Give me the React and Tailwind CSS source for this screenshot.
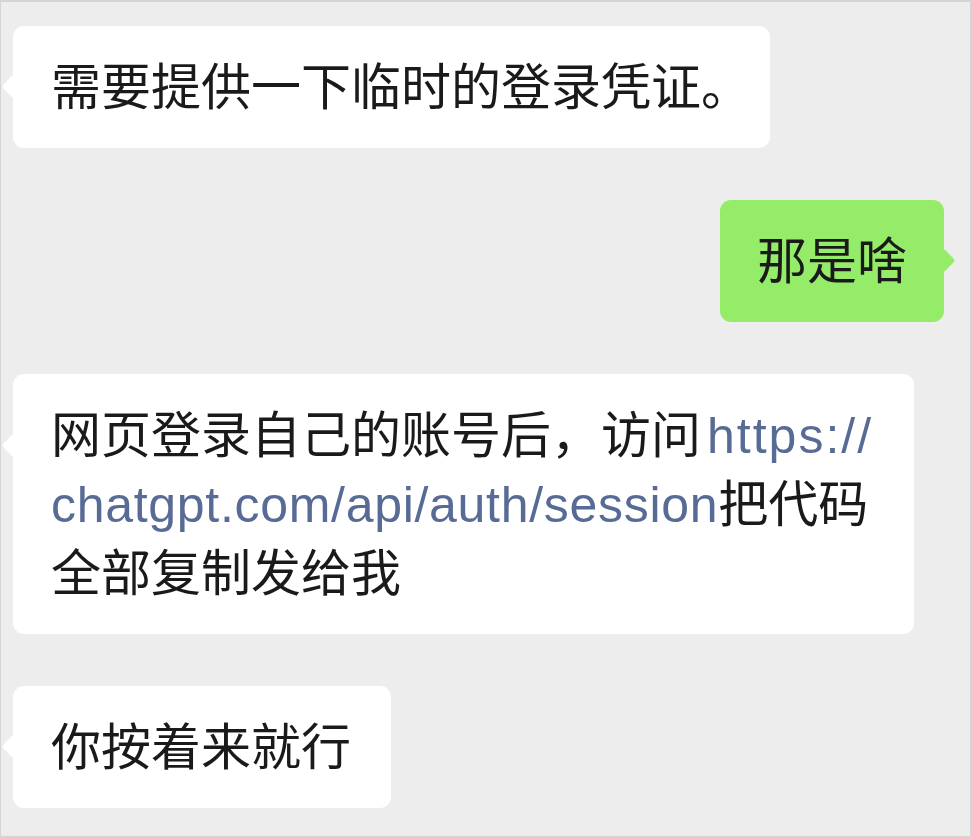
import React from 'react';

const fontCls = "font-['Liberation_Sans','Noto_Sans_CJK_SC',sans-serif]";

const Bubble = ({ children, mine, className = '', tailTop = 'top-[52px]' }) => {
  return (
    <div className={mine ? 'flex justify-end pr-[26px]' : 'flex justify-start pl-[12px]'}>
      <div
        className={
          'relative rounded-[11px] pt-[28px] pb-[25px] text-[50px] leading-[69px] text-[#1a1a1a] ' +
          (mine ? 'bg-[#95ec69] pl-[37px] pr-[37px] ' : 'bg-white pl-[38px] ') +
          className
        }
      >
        <div
          className={
            'absolute w-[17px] h-[17px] rotate-45 rounded-[3px] ' +
            tailTop +
            (mine ? ' right-[-8px] bg-[#95ec69]' : ' left-[-8px] bg-white')
          }
        ></div>
        <div className="relative">{children}</div>
      </div>
    </div>
  );
};

const Link = ({ children, className = 'tracking-[0.7px]' }) => (
  <span className={'text-[#576b95] ' + className}>{children}</span>
);

export default function App() {
  return (
    <div className={'w-[971px] h-[837px] bg-[#ededed] border border-t-2 border-[#d5d5d5] overflow-hidden ' + fontCls}>
      <div className="flex flex-col gap-[52px] pt-[24px]">
        <Bubble className="pr-[39px]">
          需要提供一下临时的登录凭证<span className="inline-block w-[30px]">。</span>
        </Bubble>

        <Bubble mine>那是啥</Bubble>

        <Bubble className="pr-[41px]" tailTop="top-[63px]">
          网页登录自己的账号后，访问<Link className="tracking-[2px] pl-[6px]">https://</Link>
          <br />
          <Link>chatgpt.com/api/auth/session</Link>把代码
          <br />
          全部复制发给我
        </Bubble>

        <Bubble className="pr-[40px]">你按着来就行</Bubble>
      </div>
    </div>
  );
}
